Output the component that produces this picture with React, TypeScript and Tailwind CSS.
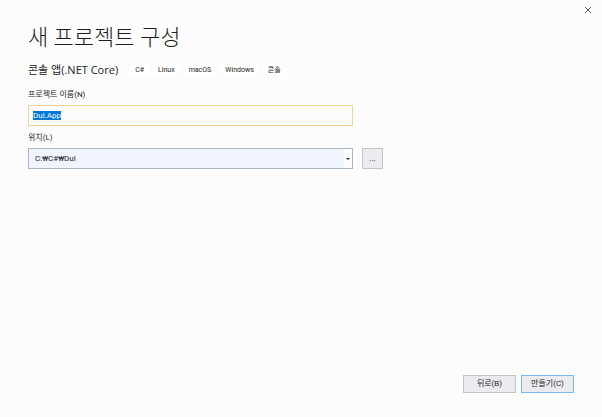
import { useEffect, useRef, useState } from "react";

const tags = ["C#", "Linux", "macOS", "Windows", "콘솔"];

const locations = ["C:₩C#₩Dul"];

const App = () => {
  const [name, setName] = useState("Dul.App");
  const [location, setLocation] = useState(locations[0]);
  const nameRef = useRef<HTMLInputElement>(null);

  // Start with the suggested name selected so typing replaces it
  useEffect(() => {
    nameRef.current?.focus();
    nameRef.current?.select();
  }, []);

  return (
    <div className="min-h-screen flex flex-col bg-[#fcfcfc] font-['Roboto','Noto_Sans_CJK_KR',sans-serif] text-[#1e1e1e]">
      <header className="flex justify-end px-2.5 pt-1.5">
        <button type="button" aria-label="닫기" className="flex size-2 items-center justify-center">
          <svg viewBox="0 0 8 8" className="size-2" fill="none" stroke="#5a5d68" strokeWidth="1">
            <path d="M1 1L7 7M7 1L1 7" />
          </svg>
        </button>
      </header>

      <main className="flex-grow px-7 pt-2">
        <h1 className="text-[22px] leading-8 font-light">새 프로젝트 구성</h1>

        {/* Template name and tags */}
        <div className="mt-2 flex items-center gap-3">
          <h2 className="font-['Open_Sans','Noto_Sans_CJK_KR',sans-serif] text-[11px] leading-4">
            콘솔 앱(.NET Core)
          </h2>
          <ul className="flex gap-1">
            {tags.map((tag) => (
              <li key={tag} className="rounded-sm bg-white px-[5px] text-[7px] leading-3">
                {tag}
              </li>
            ))}
          </ul>
        </div>

        <label htmlFor="project-name" className="mt-[11px] block text-[8px] leading-3">
          프로젝트 이름(N)
        </label>
        <input
          id="project-name"
          ref={nameRef}
          value={name}
          onChange={(e) => setName(e.target.value)}
          className="mt-1 block h-[21px] w-[325px] border border-[#f0d78c] bg-[#fcfcfc] px-1 text-[8px] outline-none selection:bg-[#0078d7] selection:text-white"
        />

        <label htmlFor="location" className="mt-1.5 block text-[8px] leading-3">
          위치(L)
        </label>
        <div className="mt-1 flex gap-[9px]">
          <div className="relative w-[325px]">
            <select
              id="location"
              value={location}
              onChange={(e) => setLocation(e.target.value)}
              className="block h-[21px] w-full appearance-none border border-[#aab5c6] bg-[#f0f4ff] px-1.5 text-[8px] outline-none"
            >
              {locations.map((path) => (
                <option key={path}>{path}</option>
              ))}
            </select>
            <span className="pointer-events-none absolute inset-y-px right-px flex w-2 items-center justify-center bg-[#fcfcfc]">
              <svg viewBox="0 0 4 2" className="h-0.5 w-1" fill="#1e2a3c">
                <path d="M0 0H4L2 2Z" />
              </svg>
            </span>
          </div>
          <button type="button" className="h-[21px] w-[21px] border border-[#c3c4ca] bg-[#ececf0] text-[8px] leading-3">
            ...
          </button>
        </div>
      </main>

      <footer className="flex justify-end gap-[5px] px-7 pb-6">
        <button type="button" className="h-[18px] w-[53px] border border-[#c3c4ca] bg-[#ececf0] text-[8px]">
          뒤로(B)
        </button>
        <button type="button" className="h-[18px] w-[53px] border border-[#7ab8f5] bg-[#ececf0] text-[8px]">
          만들기(C)
        </button>
      </footer>
    </div>
  );
};

export default App;
